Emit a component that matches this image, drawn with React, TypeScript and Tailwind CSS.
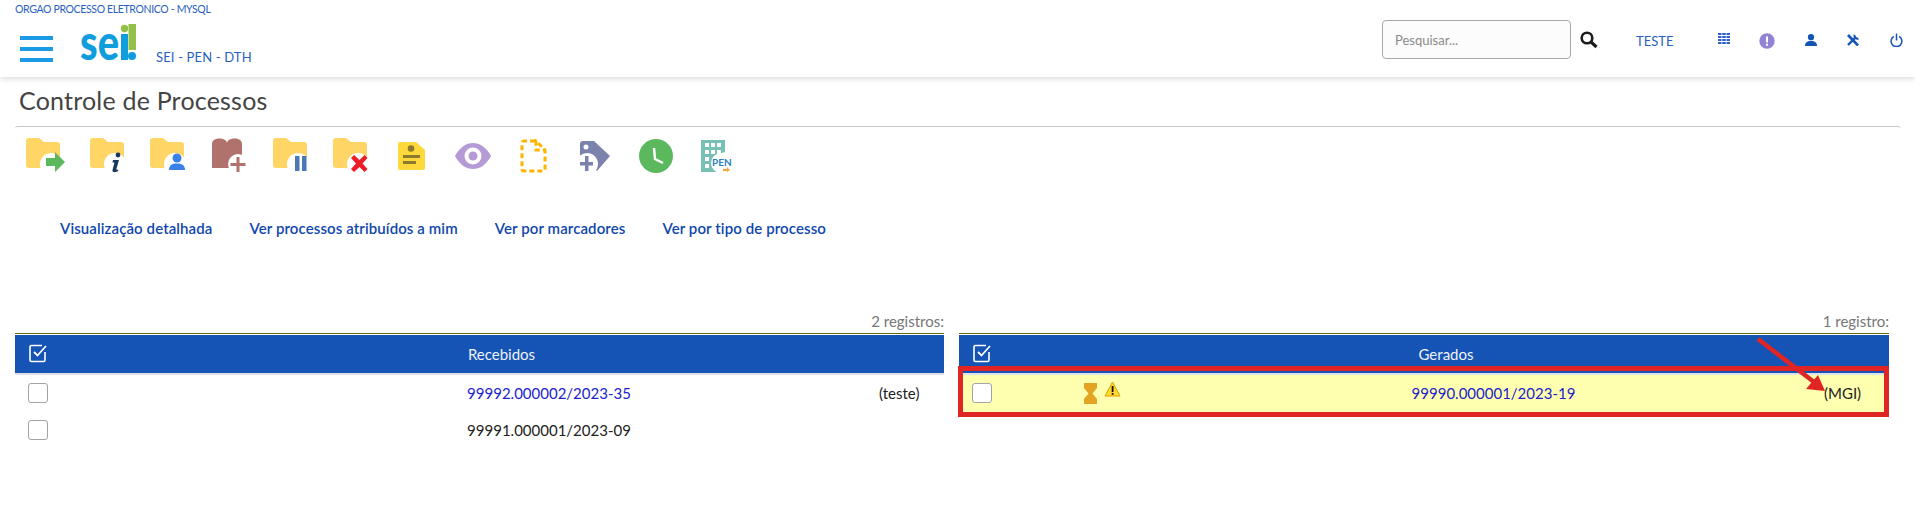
import React from 'react';

const folderPath = 'M0 3a3 3 0 0 1 3-3h10l5 4h13a3 3 0 0 1 3 3v20a3 3 0 0 1-3 3H3a3 3 0 0 1-3-3z';

const Folder: React.FC<{ w: number; children?: React.ReactNode }> = ({ w, children }) => (
  <svg width={w} height="36" viewBox={`0 0 ${w} 36`}>
    <path d={folderPath} fill="#ffd666" />
    <circle cx="25" cy="26" r="11" fill="#fff" />
    {children}
  </svg>
);

const toolbarIcons = [
  <Folder w={39} key="enviar">
    <path d="M20 20h9v-6l10 10-10 10v-6h-9z" fill="#5cb85c" />
  </Folder>,
  <Folder w={34} key="info">
    <circle cx="28" cy="17" r="2.400" fill="#17375e" />
    <path d="M23 22h6l-2.600 9c-.2.800.5 1 1.100.5l1 1c-2 2-6.500 2.500-6-.5l2-7.500h-2z" fill="#17375e" />
  </Folder>,
  <Folder w={36} key="atribuir">
    <circle cx="27" cy="20" r="4.500" fill="#3b82e8" />
    <path d="M19 32c0-5 3-6.500 8-6.500s8 1.500 8 6.500z" fill="#3b82e8" />
  </Folder>,
  <svg width="34" height="36" viewBox="0 0 34 36" key="bloco">
    <path d="M0 6c0-7 14-7 15-1 1-6 15-6 15 1v24H0z" fill="#b1716d" />
    <circle cx="26" cy="26" r="10" fill="#fff" />
    <path d="M24.500 19h3v6h6v3h-6v6h-3v-6h-6v-3h6z" fill="#b1716d" />
  </svg>,
  <Folder w={34} key="sobrestar">
    <rect x="22" y="18" width="4.500" height="15" fill="#4a7ab5" />
    <rect x="29" y="18" width="4.500" height="15" fill="#4a7ab5" />
  </Folder>,
  <Folder w={36} key="concluir">
    <path d="M18 20l3-3 5.500 5 5-5 3 3-5 5.500 5 5.500-3 3-5-5-5.500 5-3-3 5-5.500z" fill="#ee1c25" />
  </Folder>,
  <svg width="27" height="28" viewBox="0 0 27 28" key="nota">
    <path d="M2 0h16l9 8v18a2 2 0 0 1-2 2H2a2 2 0 0 1-2-2V2a2 2 0 0 1 2-2z" fill="#ffd93b" />
    <circle cx="13" cy="6.500" r="3.300" fill="#8a7a2c" />
    <rect x="5" y="13" width="17" height="3" fill="#8a7a2c" />
    <rect x="5" y="19" width="13" height="3" fill="#8a7a2c" />
  </svg>,
  <svg width="36" height="26" viewBox="0 0 36 26" key="olho">
    <path d="M0 13C5 4 11 0 18 0s13 4 18 13c-5 9-11 13-18 13S5 22 0 13z" fill="#b59ad6" />
    <circle cx="18" cy="13" r="8.500" fill="#fff" />
    <circle cx="18" cy="13" r="4.500" fill="#b59ad6" />
  </svg>,
  <svg width="27" height="34" viewBox="0 0 27 34" key="documento">
    <path
      d="M15 2H4a2 2 0 0 0-2 2v26a2 2 0 0 0 2 2h19a2 2 0 0 0 2-2V11l-9-9v9h9"
      fill="none"
      stroke="#ffb400"
      strokeWidth="3"
      strokeDasharray="5 3"
    />
  </svg>,
  <svg width="30" height="30" viewBox="0 0 30 30" key="marcador">
    <path d="M0 3a3 3 0 0 1 3-3h11l16 15-13 15-5-4V17H0z" fill="#7b82ab" />
    <circle cx="6" cy="6" r="2.500" fill="#fff" />
    <circle cx="7" cy="23" r="11" fill="#fff" />
    <path d="M5 15h3.500v6H13v3.500H8.500V30H5v-5.500H0V21h5z" fill="#7b82ab" />
  </svg>,
  <svg width="34" height="34" viewBox="0 0 34 34" key="relogio">
    <circle cx="17" cy="17" r="17" fill="#5cb85c" />
    <path d="M15 9l1 11 8 4" fill="none" stroke="#fff" strokeWidth="2.500" />
  </svg>,
  <svg width="31" height="32" viewBox="0 0 31 32" key="pen">
    <path d="M0 0h24v12a12 12 0 0 0-6 20H0z" fill="#76c0b4" />
    <g fill="#fff">
      <rect x="4" y="3" width="4" height="4" />
      <rect x="10" y="3" width="4" height="4" />
      <rect x="16" y="3" width="4" height="4" />
      <rect x="4" y="10" width="4" height="4" />
      <rect x="10" y="10" width="4" height="4" />
      <rect x="16" y="10" width="4" height="4" />
      <rect x="4" y="17" width="4" height="4" />
      <rect x="4" y="24" width="4" height="4" />
    </g>
    <circle cx="20" cy="23" r="10" fill="#fff" />
    <text x="11" y="26" fontSize="10" fontWeight="700" fill="#2a80c4" fontFamily="Lato">PEN</text>
    <path d="M22 29h4v-2l3 3-3 2v-1h-4z" fill="#f5a33b" />
  </svg>,
];

const links = ['Visualização detalhada', 'Ver processos atribuídos a mim', 'Ver por marcadores', 'Ver por tipo de processo'];

const HeaderCheck = () => (
  <svg width="19" height="19" viewBox="0 0 19 19" fill="none" stroke="#fff">
    <path d="M16 8v8a1.500 1.500 0 0 1-1.500 1.500h-12A1.500 1.500 0 0 1 1 16V3a1.500 1.500 0 0 1 1.500-1.500H13" strokeWidth="1.600" />
    <path d="M5 8l3.500 3.500L17 2" strokeWidth="1.800" />
  </svg>
);

const RowCheck = () => <span className="block w-5 h-5 rounded-[3px] border border-[#a3a3a3] bg-white" />;

interface ProcRow {
  num: string;
  link?: boolean;
  note?: string;
  flags?: boolean;
}

const ProcTable: React.FC<{ title: string; count: string; rows: ProcRow[]; highlight?: boolean; className: string }> = ({
  title,
  count,
  rows,
  highlight,
  className,
}) => (
  <div className={className}>
    <div className="h-[22px] text-right text-[15px] leading-[20px] text-[#777]">{count}</div>
    <div className="h-[42px] border-t border-t-[#5f6f12] pt-[1px] border-b-2 border-b-[#dee2e6]">
      <div className="h-[38px] bg-[#1553b5] flex items-center text-white">
        <div className="w-[30px] pl-[14px] box-content pb-[1px] shrink-0">
          <HeaderCheck />
        </div>
        <div className="flex-1 text-center text-[15px] pt-[1px] text-[#eef2fa]">{title}</div>
      </div>
    </div>
    {rows.map((r) => (
      <div key={r.num} className={`h-[37px] flex items-center ${highlight ? 'bg-[#ffffb0]' : ''}`}>
        <div className="w-[125px] pl-[13px] shrink-0 mt-[-2px]">
          <RowCheck />
        </div>
        <div className="w-[85px] h-[37px] pt-[6px] flex items-start shrink-0">
          {r.flags && (
            <>
              <svg width="13" height="21" viewBox="0 0 13 21" className="mt-[2px]">
                <path d="M0 0h13v5L8.500 10.500 13 16v5H0v-5l4.500-5.500L0 5z" fill="#e5a323" />
              </svg>
              <svg width="17" height="16" viewBox="0 0 17 16" className="ml-[7px]">
                <path d="M8.500 1L16 15H1z" fill="#ffd92e" stroke="#d9a100" strokeLinejoin="round" />
                <rect x="7.700" y="5" width="1.800" height="6" fill="#111" />
                <rect x="7.700" y="12" width="1.800" height="1.800" fill="#111" />
              </svg>
            </>
          )}
        </div>
        <div className={`flex-1 text-center text-[15px] pr-[4px] mt-[-1px] ${r.link ? 'text-[#2222cc]' : 'text-[#222]'}`}>{r.num}</div>
        <div className="w-[67px] shrink-0 pl-[2px] text-[15px] text-[#222] mt-[-1px]">{r.note}</div>
      </div>
    ))}
  </div>
);

export default function App() {
  return (
    <div className="relative w-[1915px] h-[509px] overflow-hidden bg-white font-['Lato','Liberation_Sans',sans-serif]">
      <header className="h-[77px] shadow-[0_2px_6px_rgba(0,0,0,0.14)] flex">
        <div className="w-[1382px] shrink-0">
          <div className="pl-[15px] pt-[3px] text-[10.5px] leading-[13px] text-[#2a5fc0] tracking-[-0.35px]">
            ORGAO PROCESSO ELETRONICO - MYSQL
          </div>
          <div className="flex pl-[20px] pt-[8px]">
            <div className="w-[33px] mt-[12px] mr-[27px] flex flex-col gap-[7px] h-[26px]">
              <span className="block h-[4px] bg-[#1b9ae6]" />
              <span className="block h-[4px] bg-[#1b9ae6]" />
              <span className="block h-[4px] bg-[#1b9ae6]" />
            </div>
            <svg width="58" height="40" viewBox="0 0 58 40" className="overflow-visible">
              <text x="0" y="36" fontFamily="Lato" fontWeight="900" fontSize="50" fill="#0f9ddd" textLength="39" lengthAdjust="spacingAndGlyphs">se</text>
              <rect x="41" y="10" width="7" height="26" fill="#0f9ddd" />
              <circle cx="44.500" cy="4.500" r="3.700" fill="#93c047" />
              <rect x="48.500" y="0" width="7.500" height="26" fill="#93c047" />
              <circle cx="52" cy="32" r="4" fill="#0f9ddd" />
            </svg>
            <span className="ml-[18px] mt-[25px] text-[13px] leading-[16px] text-[#2a5fc0] tracking-[0.15px]">SEI - PEN - DTH</span>
          </div>
        </div>
        <input
          readOnly
          placeholder="Pesquisar..."
          className="w-[189px] h-[39px] mt-[20px] rounded-[4px] border border-[#a8a8a8] bg-[#fcfcfc] pl-[12px] text-[13px] placeholder:text-[#8a8a8a] outline-none"
        />
        <svg width="18" height="18" viewBox="0 0 18 18" className="mt-[31px] ml-[9px] shrink-0" fill="none" stroke="#1c1c1c">
          <circle cx="7" cy="7" r="5.300" strokeWidth="2.600" />
          <path d="M11 11l5.500 5" strokeWidth="3.200" />
        </svg>
        <span className="ml-[38px] mt-[33px] w-[82px] text-[13px] leading-[16px] text-[#2a5fc0]">TESTE</span>
        <svg width="12" height="11" viewBox="0 0 12 11" className="mt-[33px] shrink-0" fill="#2d63c8">
          <path d="M0 0h3.500v2H0zM4.200 0h3.600v2H4.200zM8.500 0H12v2H8.500zM0 3h3.500v2H0zM4.200 3h3.600v2H4.200zM8.500 3H12v2H8.500zM0 6h3.500v2H0zM4.200 6h3.600v2H4.200zM8.500 6H12v2H8.500zM0 9h3.500v2H0zM4.200 9h3.600v2H4.200zM8.500 9H12v2H8.500z" />
        </svg>
        <svg width="16" height="16" viewBox="0 0 16 16" className="mt-[33px] ml-[29px] shrink-0">
          <circle cx="8" cy="8" r="7.700" fill="#9482d4" />
          <rect x="7" y="3.500" width="2" height="6" fill="#fff" />
          <rect x="7" y="10.700" width="2" height="2" fill="#fff" />
        </svg>
        <svg width="12" height="12" viewBox="0 0 12 12" className="mt-[34px] ml-[30px] shrink-0" fill="#1553b5">
          <circle cx="6" cy="3.200" r="3.100" />
          <path d="M0 12c0-3.500 2-5 6-5s6 1.500 6 5z" />
        </svg>
        <svg width="12" height="12" viewBox="0 0 12 12" className="mt-[34px] ml-[30px] shrink-0" fill="none" stroke="#1553b5">
          <path d="M1 1l10 10.500" strokeWidth="2.600" />
          <path d="M9 3L1 11" strokeWidth="2.400" />
          <path d="M7.500 0.800a3.200 3.200 0 0 0 4 3.800" strokeWidth="2" />
        </svg>
        <svg width="13" height="14" viewBox="0 0 13 14" className="mt-[33px] ml-[31px] shrink-0" fill="none" stroke="#1553b5" strokeWidth="1.500">
          <path d="M3.800 3.500a5.400 5.400 0 1 0 5.400 0" />
          <path d="M6.500 0.500v7" />
        </svg>
      </header>

      <main className="pl-[15px] pr-[14px]">
        <h1 className="pl-[4px] pt-[7px] text-[25px] leading-[32px] text-[#444] tracking-[0.2px]">Controle de Processos</h1>
        <div className="mt-[10px] h-[7px] border-t border-[#c9c9c9] rounded-t-[3px]" />
        <div className="flex items-center h-[36px] mt-[5px] mb-[1px]">
          {toolbarIcons.map((icon, i) => (
            <div key={i} className="w-[61px] shrink-0 flex justify-center">
              {icon}
            </div>
          ))}
        </div>
        <div className="flex gap-[37px] mt-[44px] pl-[45px] h-[20px] items-center text-[15px] tracking-[0.1px] font-semibold text-[#0f47ad]">
          {links.map((l) => (
            <a key={l}>{l}</a>
          ))}
        </div>
        <div className="flex gap-[15px] mt-[73px]">
          <ProcTable
            className="w-[929px] shrink-0"
            title="Recebidos"
            count="2 registros:"
            rows={[
              { num: '99992.000002/2023-35', link: true, note: '(teste)' },
              { num: '99991.000001/2023-09' },
            ]}
          />
          <ProcTable
            className="w-[930px] shrink-0"
            title="Gerados"
            count="1 registro:"
            highlight
            rows={[{ num: '99990.000001/2023-19', link: true, note: '(MGI)', flags: true }]}
          />
        </div>
      </main>

      {/* anotacao vermelha por cima da tabela */}
      <div className="absolute left-[958px] top-[366px] w-[931px] h-[51px] border-[5px] border-[#e02525]" />
      <svg className="absolute left-[1750px] top-[330px]" width="90" height="70" viewBox="0 0 90 70">
        <path d="M8 9l56 43" stroke="#e02525" strokeWidth="4.500" />
        <path d="M75 61L56 59 68 45z" fill="#e02525" />
      </svg>
    </div>
  );
}
